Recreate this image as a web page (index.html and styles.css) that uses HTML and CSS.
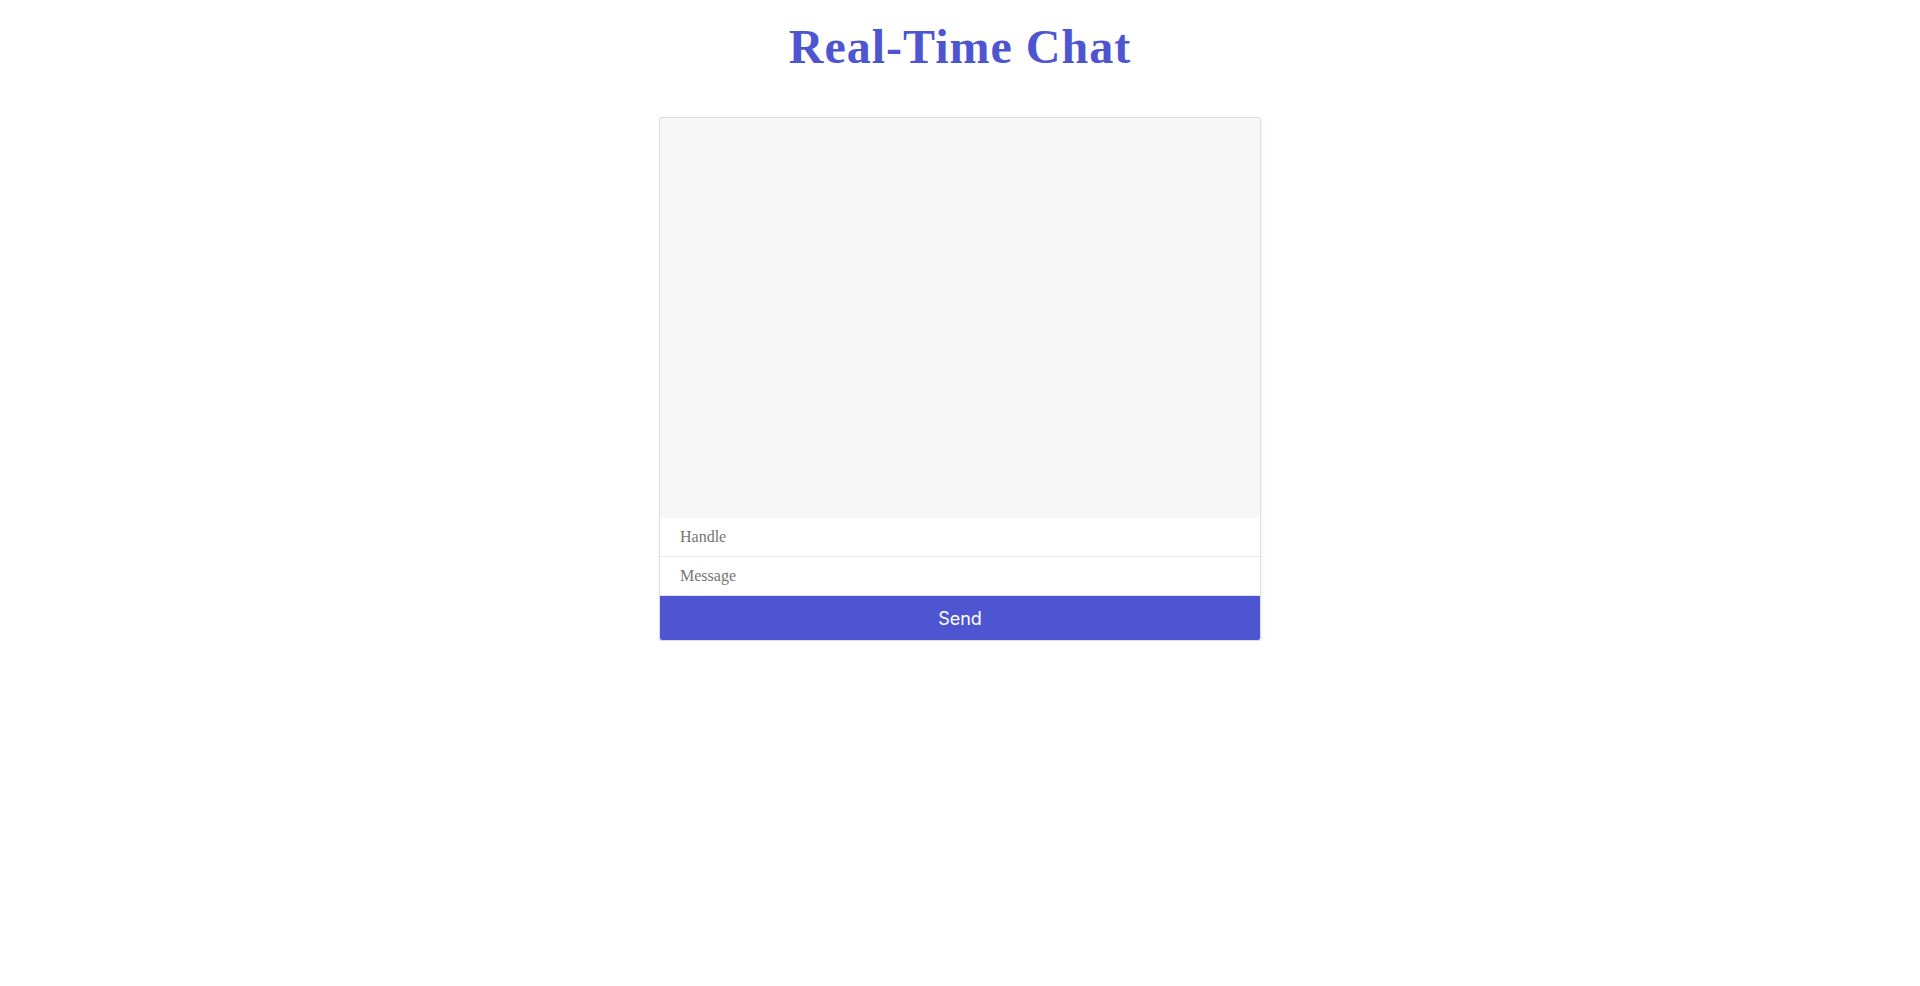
FILE: index.html
```html
<!DOCTYPE html>
<html>
<head>
<meta charset="utf-8">
<title>Real-Time Chat</title>
<link rel="stylesheet" href="styles.css">
</head>
<body>
<h1 class="title">Real-Time Chat</h1>
<div class="chat">
  <div class="chat-window"><div class="output"></div></div>
  <input class="field" type="text" placeholder="Handle">
  <input class="field" type="text" placeholder="Message">
  <button class="send">Send</button>
</div>
</body>
</html>
```

FILE: styles.css
```css
body {
  margin: 0;
  background: #fff;
  font-family: "Liberation Serif", "Times New Roman", serif;
}
.title {
  margin: 20px 0 0;
  text-align: center;
  font-family: "Liberation Serif", "Times New Roman", serif;
  font-size: 48px;
  font-weight: bold;
  line-height: 53px;
  letter-spacing: 1px;
  color: #4e55d1;
}
.chat {
  max-width: 600px;
  margin: 44px auto 0;
  border: 1px solid #ddd;
  box-shadow: 1px 3px 5px rgba(0,0,0,0.05);
  border-radius: 2px;
}
.chat-window {
  height: 400px;
  overflow: auto;
  background: #f7f7f7;
}
.field {
  display: block;
  width: 100%;
  box-sizing: border-box;
  padding: 10px 20px;
  border: 0;
  border-bottom: 1px solid #e6e6e6;
  background: #fff;
  font-family: "Liberation Serif", "Times New Roman", serif;
  font-size: 16px;
  line-height: 18px;
  height: 39px;
  outline: none;
}
.field::placeholder {
  color: #757575;
}
.send {
  display: block;
  width: 100%;
  border: 0;
  padding: 12px 0;
  height: 44px;
  background: #4e55d1;
  color: #fff;
  font-family: "Inter", "Noto Sans", sans-serif;
  font-size: 18px;
  border-radius: 0 0 2px 2px;
  margin: 0;
}
```
